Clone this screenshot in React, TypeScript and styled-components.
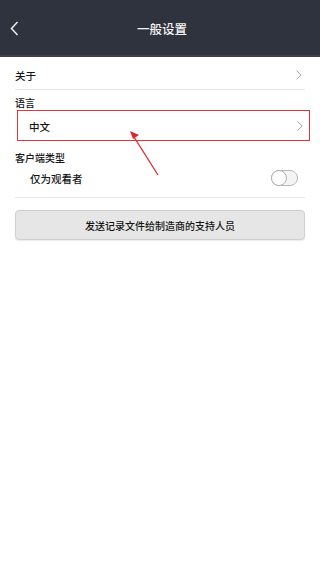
import React from "react";
import styled, { createGlobalStyle } from "styled-components";

const Global = createGlobalStyle`
  html, body { margin: 0; padding: 0; background: #ffffff; }
  body { font-family: "Noto Sans CJK SC", "Noto Sans", sans-serif; }
  * { box-sizing: border-box; }
`;

const Page = styled.div`
  position: relative;
  width: 320px;
  height: 569px;
  background: #ffffff;
  overflow: hidden;
`;

const Header = styled.header`
  height: 57px;
  background: #2e333d;
  border-bottom: 2px solid #3b404a;
  display: grid;
  grid-template-columns: 40px 1fr 40px;
  align-items: center;
  color: #f2f2f2;
`;

const BackButton = styled.div`
  display: flex;
  align-items: center;
  justify-content: center;
  height: 100%;
  padding-right: 12px;
  padding-top: 2px;
`;

const Title = styled.h1`
  margin: 0;
  text-align: center;
  font-size: 12.5px;
  font-weight: 500;
  padding-top: 2px;
  padding-left: 4px;
`;

const Content = styled.main`
  padding: 0 15px;
  display: flex;
  flex-direction: column;
`;

const Row = styled.div<{ $indent?: boolean; $height: number; $top?: number; $right?: number }>`
  height: ${(p) => p.$height}px;
  padding-top: ${(p) => p.$top ?? 0}px;
  display: flex;
  align-items: center;
  justify-content: space-between;
  padding-left: ${(p) => (p.$indent ? 15 : 0)}px;
  padding-right: ${(p) => p.$right ?? 3}px;
  font-size: 10.5px;
  font-weight: 500;
  color: #151515;
`;

const Divider = styled.div<{ $top?: number }>`
  margin-top: ${(p) => p.$top ?? 0}px;
  height: 1px;
  background: #e8e8e8;
`;

const SectionLabel = styled.div<{ $top: number; $height: number }>`
  margin-top: ${(p) => p.$top}px;
  height: ${(p) => p.$height}px;
  display: flex;
  align-items: center;
  font-size: 10px;
  font-weight: 500;
  color: #151515;
`;

const HighlightRow = styled.div`
  margin-left: 2px;
  margin-right: -5px;
  height: 31px;
  border: 1.5px solid #e2353b;
  display: flex;
  align-items: center;
  justify-content: space-between;
  padding-left: 11px;
  padding-right: 6px;
  padding-top: 1px;
  font-size: 10.5px;
  font-weight: 500;
  color: #151515;
`;

const Toggle = styled.div`
  width: 27px;
  height: 16px;
  border-radius: 8px;
  border: 1px solid #b8b8b8;
  background: #f4f4f4;
  position: relative;
`;

const Knob = styled.div`
  position: absolute;
  left: -1px;
  top: -1px;
  width: 16px;
  height: 16px;
  border-radius: 50%;
  background: #fff;
  border: 1px solid #b0b0b0;
`;

const SendButton = styled.button`
  margin-top: 12px;
  height: 30px;
  width: 100%;
  border: 1px solid #cfcfcf;
  border-radius: 4px;
  background: #e6e6e6;
  font-family: inherit;
  font-size: 10px;
  font-weight: 500;
  color: #151515;
  box-shadow: 0 1px 1px rgba(0, 0, 0, 0.08);
`;

const ArrowOverlay = styled.svg`
  position: absolute;
  left: 0;
  top: 0;
  pointer-events: none;
`;

const Chevron = ({ color = "#a6a6a6" }: { color?: string }) => (
  <svg width={6} height={10} viewBox="0 0 6 10">
    <path d="M0.6 0.6 L5.2 5 L0.6 9.4" fill="none" stroke={color} strokeWidth={1} />
  </svg>
);

export default function App() {
  return (
    <Page>
      <Global />
      <Header>
        <BackButton>
          <svg width={9} height={15} viewBox="0 0 9 15">
            <path d="M7.5 1 L1.5 7.5 L7.5 14" fill="none" stroke="#e8e8e8" strokeWidth={1.6} />
          </svg>
        </BackButton>
        <Title>一般设置</Title>
        <div />
      </Header>
      <Content>
        <Row $height={32} $top={4}>
          <span>关于</span>
          <Chevron />
        </Row>
        <Divider />
        <SectionLabel $top={5} $height={15}>语言</SectionLabel>
        <HighlightRow>
          <span>中文</span>
          <Chevron />
        </HighlightRow>
        <SectionLabel $top={8} $height={16}>客户端类型</SectionLabel>
        <Row $indent $height={26} $right={7}>
          <span>仅为观看者</span>
          <Toggle>
            <Knob />
          </Toggle>
        </Row>
        <Divider $top={6} />
        <SendButton>发送记录文件给制造商的支持人员</SendButton>
      </Content>
      <ArrowOverlay width={320} height={569}>
        <line x1={158} y1={175} x2={134} y2={137} stroke="#e0262b" strokeWidth={1.3} />
        <polygon points="130,131 139,135 133,139" fill="#e0262b" />
      </ArrowOverlay>
    </Page>
  );
}
